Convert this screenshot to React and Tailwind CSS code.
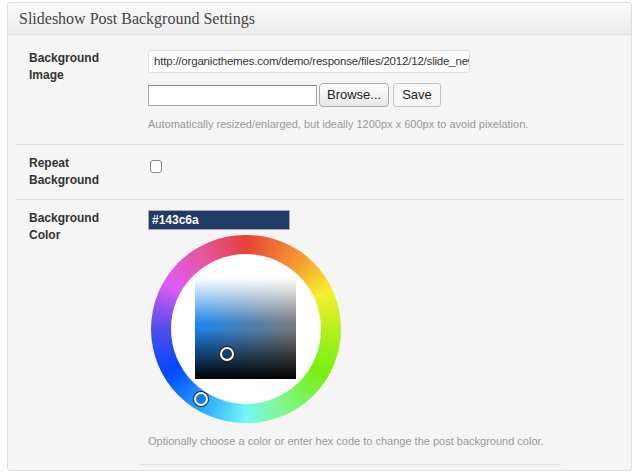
export default function App() {
  const f = { fontFamily: '"Liberation Sans", Arial, sans-serif' };
  return (
    <div className="w-[640px] h-[474px] bg-white pt-[2px] pl-[7px]" style={f}>
      <div className="w-[625px] h-[469px] border border-[#dfdfdf] rounded-[3px] bg-[#f5f5f5] overflow-hidden">
        <div className="h-[32px] border-b border-[#dfdfdf] bg-[linear-gradient(#f9f9f9,#ececec)] pl-[11px] flex items-center">
          <span className="text-[16px] text-[#464646]" style={{ fontFamily: '"Liberation Serif", Georgia, serif' }}>Slideshow Post Background Settings</span>
        </div>
        <div className="px-[7px]">
          <div className="flex border-b border-[#dfdfdf] h-[110px] pt-[15px]">
            <div className="w-[133px] pl-[14px] text-[12px] font-bold text-[#333] leading-[17px]">Background<br />Image</div>
            <div className="flex flex-col">
              <div className="w-[322px] h-[23px] bg-white border border-[#dfdfdf] rounded-[3px] text-[11.5px] tracking-[-0.2px] text-[#333] pl-[5px] flex items-center overflow-hidden whitespace-nowrap">http://organicthemes.com/demo/response/files/2012/12/slide_new.jpg</div>
              <div className="flex items-center mt-[10px] gap-[2px]">
                <div className="w-[169px] h-[21px] bg-white border border-[#aaa] border-t-[#888]" />
                <div className="h-[24px] px-[7px] bg-[linear-gradient(#fff,#e8e8e8)] border border-[#aaa] rounded-[4px] text-[13px] text-[#222] flex items-center">Browse...</div>
                <div className="h-[24px] ml-[2px] px-[8px] bg-[#f7f7f7] border border-[#c4c4c4] rounded-[3px] text-[13px] text-[#222] flex items-center">Save</div>
              </div>
              <div className="mt-[9px] text-[11px] text-[#999]">Automatically resized/enlarged, but ideally 1200px x 600px to avoid pixelation.</div>
            </div>
          </div>
          <div className="flex border-b border-[#dfdfdf] h-[55px] pt-[10px]">
            <div className="w-[133px] pl-[14px] text-[12px] font-bold text-[#333] leading-[17px]">Repeat<br />Background</div>
            <div className="w-[12px] h-[13px] mt-[5px] ml-[2px] bg-white border border-[#888] rounded-[3px]" />
          </div>
          <div className="flex pt-[10px]">
            <div className="w-[133px] pl-[14px] text-[12px] font-bold text-[#333] leading-[17px]">Background<br />Color</div>
            <div className="flex flex-col">
              <div className="w-[142px] h-[20px] bg-[#1e3c66] border border-[#aaa] text-white text-[12px] font-bold pl-[3px] flex items-center">#143c6a</div>
              <div className="relative w-[190px] h-[188px] mt-[5px] ml-[3px]">
                <div className="absolute inset-0 rounded-full bg-[conic-gradient(#e8413a,#f5a030_40deg,#f7ee2f_65deg,#9ef01a_100deg,#78ef10_120deg,#80f8a0_160deg,#72f8f5_180deg,#27a5ff_210deg,#0048ff_240deg,#4f4ee8_270deg,#df5cf5_300deg,#e4559e_330deg,#e8413a)]" />
                <div className="absolute left-[20px] top-[19px] w-[150px] h-[150px] rounded-full bg-white" />
                <div className="absolute left-[44px] top-[43px] w-[101px] h-[101px] bg-[linear-gradient(90deg,#1a86f0,#7a7a7a)]">
                  <div className="w-full h-full bg-[linear-gradient(rgba(255,255,255,1),rgba(255,255,255,0)_45%,rgba(0,0,0,0)_50%,rgba(0,0,0,1))]" />
                </div>
                <div className="absolute left-[69px] top-[112px] w-[14px] h-[14px] rounded-full bg-[#143c6a] border-2 border-white ring-1 ring-[#222]" />
                <div className="absolute left-[43px] top-[157px] w-[14px] h-[14px] rounded-full bg-[#0a7ff0] border-2 border-white ring-1 ring-[#222]" />
              </div>
              <div className="mt-[10px] text-[11px] text-[#999]">Optionally choose a color or enter hex code to change the post background color.</div>
              <div className="mt-[14px] w-[422px] -ml-[9px] border-b border-[#dfdfdf]" />
            </div>
          </div>
        </div>
      </div>
    </div>
  );
}
